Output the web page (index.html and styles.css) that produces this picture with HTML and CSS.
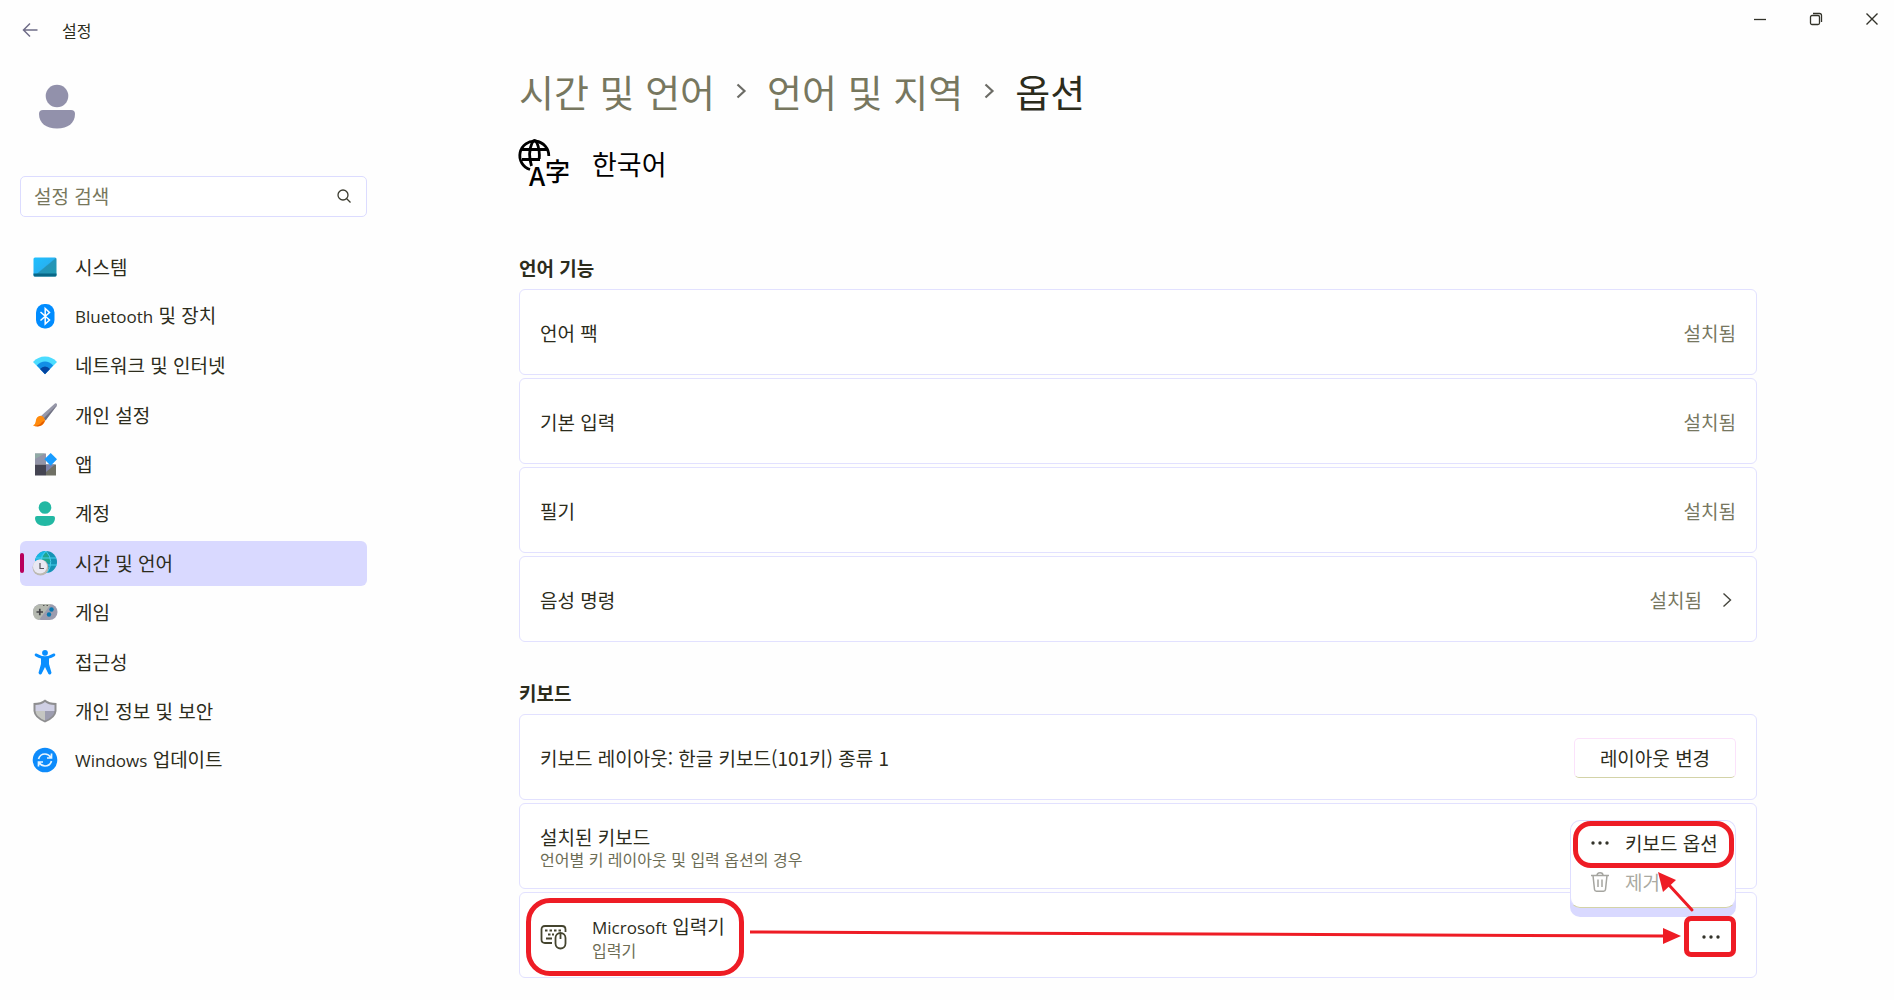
FILE: index.html
```html
<!DOCTYPE html>
<html lang="ko">
<head>
    <meta charset="UTF-8">
    <meta name="viewport" content="width=device-width, initial-scale=1.0">
    <title>설정</title>
    <link rel="stylesheet" href="styles.css">
</head>
<body>
    <header class="titlebar">
        <button class="back" aria-label="뒤로">
            <svg width="16" height="16" viewBox="0 0 16 16"><path d="M8 1.5 1.5 8 8 14.5M1.5 8H15.5" fill="none" stroke="#6f6d88" stroke-width="1.5"/></svg>
        </button>
        <span class="app-name">설정</span>
        <div class="window-controls">
            <button aria-label="최소화"><svg width="14" height="14" viewBox="0 0 14 14"><path d="M1 7.5H13" stroke="#33332a" stroke-width="1.3"/></svg></button>
            <button aria-label="이전 크기로"><svg width="14" height="14" viewBox="0 0 14 14" fill="none" stroke="#33332a" stroke-width="1.3"><rect x="1.5" y="3.5" width="9" height="9" rx="1.5"/><path d="M4 1.5H10.5Q12.5 1.5 12.5 3.5V10"/></svg></button>
            <button aria-label="닫기"><svg width="14" height="14" viewBox="0 0 14 14"><path d="M1.5 1.5 12.5 12.5M12.5 1.5 1.5 12.5" stroke="#33332a" stroke-width="1.4"/></svg></button>
        </div>
    </header>

    <div class="layout">
        <aside class="sidebar">
            <svg class="avatar" width="36" height="44" viewBox="0 0 36 44" fill="#9291ab"><circle cx="18" cy="11" r="11.3"/><path d="M4 25H32Q36 25 36 29C36 38 29 43.5 18 43.5S0 38 0 29Q0 25 4 25Z"/></svg>

            <label class="search">
                <input type="search" placeholder="설정 검색" aria-label="설정 검색">
                <svg width="14" height="14" viewBox="0 0 14 14" fill="none" stroke="#3c3c30" stroke-width="1.3"><circle cx="6" cy="6" r="5"/><path d="M9.5 9.5 13.5 13.5"/></svg>
            </label>

            <nav class="nav">
                <a href="#" class="nav-item">
                    <svg width="24" height="24" viewBox="0 0 24 24"><defs><linearGradient id="sys" x1="0" y1="0" x2="1" y2="1"><stop offset="0" stop-color="#1fc0ff"/><stop offset=".48" stop-color="#27b2f2"/><stop offset=".52" stop-color="#2494b8"/><stop offset="1" stop-color="#1f9bb0"/></linearGradient></defs><rect x=".5" y="2.5" width="23" height="19" rx="1.5" fill="url(#sys)"/><path d="M.5 18.5H23.5V20Q23.5 21.5 22 21.5H2Q.5 21.5 .5 20Z" fill="#086787"/></svg>
                    시스템
                </a>
                <a href="#" class="nav-item">
                    <svg width="24" height="24" viewBox="0 0 24 24"><rect x="3" y="0" width="18.5" height="24.5" rx="8.5" fill="#008cff"/><path d="M7.5 8 16.5 16 12.2 20V4.5L16.5 8.5 7.5 16.5" fill="none" stroke="#fff" stroke-width="1.5"/></svg>
                    <span><span class="latin">Bluetooth</span> 및 장치</span>
                </a>
                <a href="#" class="nav-item">
                    <svg width="24" height="24" viewBox="0 0 24 24"><path d="M0 9Q5 3.5 12 3.5T24 9L12 21Z" fill="#4bdcff"/><path d="M3.8 12.5Q7.5 8.5 12 8.5T20.2 12.5L12 21Z" fill="#128ee6"/><path d="M7 16Q9 13.5 12 13.5T17 16L12 21.2Z" fill="#0444a0"/></svg>
                    네트워크 및 인터넷
                </a>
                <a href="#" class="nav-item">
                    <svg width="24" height="24" viewBox="0 0 24 24"><path d="M22.2.3Q25 .2 23.6 3.3L12.5 17.5 8 13Z" fill="#9697a8"/><path d="M24 2 12.5 17.5 10.5 15.5Z" fill="#6f7080"/><path d="M7.500 12.800Q11.500 13.500 12 17.500C11 23 5 24.500 0 22.500Q2.500 21.500 2.700 18.500C3 15 5 13 7.500 12.800Z" fill="#ff8a0c"/><path d="M9 19Q7 22.500 1.500 23Q9 25 12 17.500Z" fill="#e45d00"/></svg>
                    개인 설정
                </a>
                <a href="#" class="nav-item">
                    <svg width="24" height="24" viewBox="0 0 24 24"><rect x="2" y="1.5" width="11" height="11" fill="#9294a8"/><path d="M2 1.5H12L2 7Z" fill="#91aaa6"/><rect x="2" y="12.5" width="11" height="11" fill="#444452"/><rect x="13" y="12.5" width="10" height="11" fill="#6f7065"/><path d="M13 12.5H22L13 20Z" fill="#7c82a8"/><path d="M17.7 1 24 7.3 17.7 13.8 11.4 7.3Z" fill="#189cff"/></svg>
                    앱
                </a>
                <a href="#" class="nav-item">
                    <svg width="24" height="24" viewBox="0 0 24 24" fill="#22b8a3"><circle cx="12" cy="6.5" r="6.3"/><path d="M4 15H20Q22 15 22 17C22 22 18 25 12 25S2 22 2 17Q2 15 4 15Z"/></svg>
                    계정
                </a>
                <a href="#" class="nav-item active" aria-current="page">
                    <svg width="24" height="24" viewBox="0 0 24 24"><circle cx="13" cy="11" r="11" fill="#1593b5"/><path d="M13 0A11 11 0 0 0 2 11H13Z" fill="#18b5e4"/><path d="M9 8Q11 2 13.5 1Q18 7 17 13" fill="#21a68f"/><path d="M3 7H23M7 14H24M13 0Q22 10 14 22M13 0Q8 4 8 10" fill="none" stroke="#48cfec" stroke-width="1"/><circle cx="7.5" cy="16.5" r="8" fill="#bcb9b2"/><circle cx="7" cy="15.5" r="7" fill="#e9e8f2"/><path d="M7 12V17.5H11" fill="none" stroke="#55555c" stroke-width="1.2"/></svg>
                    시간 및 언어
                </a>
                <a href="#" class="nav-item">
                    <svg width="24" height="24" viewBox="0 0 24 24"><rect x="0" y="4" width="24.5" height="16" rx="8" fill="#9c9cae"/><path d="M8 4H18L6 20Q0 19 0 12T8 4Z" fill="#b5b9b0"/><path d="M3.5 12H10M6.8 8.8V15.2" stroke="#444448" stroke-width="1.7"/><circle cx="18.5" cy="9.5" r="2.2" fill="#0878b0"/><circle cx="16" cy="14.5" r="2.2" fill="#0878b0"/><path d="M10 5.5H11.5M13.5 5.5H15" stroke="#555"/></svg>
                    게임
                </a>
                <a href="#" class="nav-item">
                    <svg width="24" height="24" viewBox="0 0 24 24" fill="#0a8fff"><circle cx="12" cy="2.8" r="2.9"/><path d="M3.5 3.6Q8 6.3 12 6.3T20.5 3.6C22.3 3 23 5.5 21.5 6.2Q18.500 8 16 8.500V14L18.500 22.800Q18 25.500 15.500 24L12 17 8.500 24Q6 25.500 5.500 22.800L8 14V8.500Q5.500 8 2.500 6.200C1 5.500 1.700 3 3.500 3.600Z"/></svg>
                    접근성
                </a>
                <a href="#" class="nav-item">
                    <svg width="24" height="24" viewBox="0 0 24 24"><path d="M12 .5Q16 4 23.5 4V12Q23 19 12 23.5Q1 19 .5 12V4Q8 4 12 .5Z" fill="#8e8e90"/><path d="M12 3Q15.5 5.8 21.5 6V12H2.5V6Q8.5 5.800 12 3Z" fill="#cfcfe4"/><path d="M2.500 12H12V21.500Q3 18 2.500 12Z" fill="#c5c6c2"/><path d="M12 12H21.500Q21 18 12 21.500Z" fill="#9d9db0"/></svg>
                    개인 정보 및 보안
                </a>
                <a href="#" class="nav-item">
                    <svg width="24" height="24" viewBox="0 0 24 24"><circle cx="12" cy="12" r="12.3" fill="#0d8bfb"/><path d="M5.500 11Q7 6 12 6Q15.500 6 18 9.500M18.500 5.500V10H14M18.500 13Q17 18 12 18Q8.500 18 6 14.500M5.500 18.500V14H10" fill="none" stroke="#e8f5ff" stroke-width="1.7"/></svg>
                    <span><span class="latin">Windows</span> 업데이트</span>
                </a>
            </nav>
        </aside>

        <main class="content">
            <h1 class="breadcrumb">
                <a href="#">시간 및 언어</a>
                <svg width="10" height="16" viewBox="0 0 10 16"><path d="M1.5 1.5 8.5 8 1.5 14.5" fill="none" stroke="#6c6c66" stroke-width="2.2"/></svg>
                <a href="#">언어 및 지역</a>
                <svg width="10" height="16" viewBox="0 0 10 16"><path d="M1.5 1.5 8.5 8 1.5 14.5" fill="none" stroke="#6c6c66" stroke-width="2.2"/></svg>
                <span>옵션</span>
            </h1>

            <div class="language">
                <svg class="language-icon" width="50" height="50" viewBox="0 0 50 50">
                    <g fill="none" stroke="#000" stroke-width="2.8">
                        <path d="M11 31.500A14.500 14.500 0 1 1 29.800 18"/>
                        <path d="M12.500 28Q8.500 15 13 5Q15.500 0 18 5Q21 12 20.200 21M3 11.500H28M3 21.500H21"/>
                    </g>
                    <text x="10" y="48" font-size="26">A</text>
                    <text x="26" y="43" font-size="25">字</text>
                </svg>
                <span>한국어</span>
            </div>

            <section class="group">
                <h2>언어 기능</h2>
                <div class="card"><span>언어 팩</span><span class="status">설치됨</span></div>
                <div class="card"><span>기본 입력</span><span class="status">설치됨</span></div>
                <div class="card"><span>필기</span><span class="status">설치됨</span></div>
                <a href="#" class="card">
                    <span>음성 명령</span>
                    <span class="status">설치됨</span>
                    <svg class="chevron" width="14" height="16" viewBox="0 0 14 16"><path d="M1.5 1.5 8.5 8 1.5 14.5" fill="none" stroke="#44443c" stroke-width="1.4"/></svg>
                </a>
            </section>

            <section class="group">
                <h2>키보드</h2>
                <div class="card">
                    <span>키보드 레이아웃: 한글 키보드(101키) 종류 1</span>
                    <button class="layout-btn">레이아웃 변경</button>
                </div>
                <div class="card">
                    <div>
                        <div>설치된 키보드</div>
                        <div class="sub">언어별 키 레이아웃 및 입력 옵션의 경우</div>
                    </div>
                </div>
                <div class="card ime">
                    <svg class="ime-icon" width="27" height="26" viewBox="0 0 27 26">
                        <g fill="none" stroke="#44442e" stroke-width="1.8">
                            <path d="M12 19H5Q1.5 19 1.5 15.5V5.5Q1.5 2 5 2H22Q25.5 2 25.5 5.5V8M6 14.5H12"/>
                            <rect x="15.5" y="9" width="10" height="15.5" rx="5"/>
                            <path d="M20.5 9V15"/>
                        </g>
                        <path d="M5 6.5H7.5M9.5 6.5H12M14 6.5H16.5M18.5 6.5H21M8 10.5H10.5M12 10.5H14" stroke="#44442e" stroke-width="2.2"/>
                    </svg>
                    <div>
                        <div><span class="latin">Microsoft</span> 입력기</div>
                        <div class="sub">입력기</div>
                    </div>
                    <button class="more" aria-label="추가 옵션">
                        <svg width="18" height="4" viewBox="0 0 18 4" fill="#33332a"><circle cx="2" cy="2" r="1.7"/><circle cx="9" cy="2" r="1.7"/><circle cx="16" cy="2" r="1.7"/></svg>
                    </button>

                    <div class="menu">
                        <button class="menu-item">
                            <svg width="18" height="20" viewBox="0 0 18 20" fill="#33332a"><circle cx="2" cy="10" r="1.7"/><circle cx="9" cy="10" r="1.7"/><circle cx="16" cy="10" r="1.7"/></svg>
                            키보드 옵션
                        </button>
                        <button class="menu-item" disabled>
                            <svg width="18" height="20" viewBox="0 0 18 20" fill="none" stroke="#a5a5a0" stroke-width="1.5"><path d="M0 3.5H18M2 3.5 3.5 17.5Q3.7 19.2 5.5 19.2H12.5Q14.3 19.2 14.5 17.5L16 3.5M6 3.5Q6 .8 9 .8T12 3.5M7 7.5V15M11 7.5V15"/></svg>
                            제거
                        </button>
                    </div>

                    <!-- step markers -->
                    <div class="mark mark-ime"></div>
                    <div class="mark mark-more"></div>
                    <div class="mark mark-option"></div>
                    <svg class="arrow-line" viewBox="0 0 100 8" preserveAspectRatio="none"><path d="M0 2 100 6" stroke="#ee1c25" stroke-width="3" vector-effect="non-scaling-stroke"/></svg>
                    <svg class="arrow-head" width="18" height="16" viewBox="0 0 18 16"><path d="M0 0 18 8 0 16Z" fill="#ee1c25"/></svg>
                    <svg class="arrow-up" width="36" height="40" viewBox="0 0 36 40"><path d="M34 38 11 13" stroke="#ee1c25" stroke-width="3" stroke-linecap="round"/><path d="M0 0 18 8 5 20Z" fill="#ee1c25"/></svg>
                </div>
            </section>
        </main>
    </div>
</body>
</html>
```
FILE: styles.css
```css
* {
    box-sizing: border-box;
}

body {
    margin: 0;
    background-color: #fefefe;
    color: #2c2c1c;
    font-family: "Noto Sans CJK KR", sans-serif;
    font-size: 19px;
    line-height: 24px;
}

a {
    color: inherit;
    text-decoration: none;
}

button {
    padding: 0;
    border: none;
    background: none;
    color: inherit;
    font: inherit;
    cursor: pointer;
}

svg {
    display: block;
    flex: none;
    overflow: visible;
}

.latin {
    font-family: "Open Sans", sans-serif;
    font-size: 17px;
}

/* title bar */
.titlebar {
    display: flex;
    align-items: center;
    height: 60px;
    padding: 0 2px 0 22px;
}

.app-name {
    margin-left: 24px;
    font-size: 16px;
    line-height: 22px;
}

.window-controls {
    display: flex;
    align-self: flex-start;
    gap: 16px;
    margin-left: auto;
}

.window-controls button {
    display: grid;
    place-items: center;
    width: 40px;
    height: 38px;
}

.layout {
    display: flex;
}

/* sidebar */
.sidebar {
    flex: none;
    width: 367px;
    padding: 25px 0 0 20px;
}

.avatar {
    margin-left: 19px;
}

.search {
    display: flex;
    align-items: center;
    height: 41px;
    margin-top: 47px;
    padding: 0 15px 2px 13px;
    border: 1px solid #dcdcff;
    border-radius: 5px;
    background-color: #fff;
}

.search input {
    flex: 1;
    min-width: 0;
    padding: 0;
    border: none;
    outline: none;
    background: none;
    color: inherit;
    font: inherit;
}

.search input::placeholder {
    color: #77775c;
    opacity: 1;
}

.nav {
    display: flex;
    flex-direction: column;
    justify-content: space-between;
    min-height: 539px;
    margin-top: 28px;
}

.nav-item {
    position: relative;
    display: flex;
    align-items: center;
    gap: 18px;
    height: 45px;
    padding: 0 0 2px 13px;
    border-radius: 6px;
}

.nav-item.active {
    background-color: #d9d9ff;
}

.nav-item.active::before {
    content: "";
    position: absolute;
    left: 0;
    width: 4px;
    height: 20px;
    border-radius: 2px;
    background-color: #b8005c;
}

/* content */
.content {
    flex: 1;
    padding: 3px 137px 20px 152px;
}

.breadcrumb {
    display: flex;
    align-items: center;
    gap: 21px;
    margin: 0;
    font-size: 38px;
    font-weight: 400;
    line-height: 56px;
}

.breadcrumb a {
    color: #77775f;
}

.language {
    display: flex;
    align-items: center;
    gap: 23px;
    margin-top: 17px;
    color: #000;
    font-size: 27px;
    line-height: 50px;
}

.language span {
    padding-top: 3px;
}

.language-icon {
    font-weight: 500;
}

.group {
    display: flex;
    flex-direction: column;
    gap: 3px;
    margin-top: 39px;
}

.language + .group {
    margin-top: 67px;
}

.group h2 {
    margin: 0 0 6px;
    font-size: 19px;
    font-weight: 700;
    line-height: 24px;
}

.card {
    position: relative;
    display: flex;
    align-items: center;
    min-height: 86px;
    padding: 1px 20px 0;
    border: 1px solid #e2e1ff;
    border-radius: 6px;
    background-color: #fff;
}

.status {
    margin-left: auto;
    color: #77775f;
}

.chevron {
    margin-left: 20px;
}

.sub {
    color: #6d6d55;
    font-size: 16px;
    line-height: 20px;
}

.layout-btn {
    width: 162px;
    height: 40px;
    margin-left: auto;
    border: 1px solid #fbe2fb;
    border-bottom-color: #d3d3a8;
    border-radius: 5px;
}

.ime {
    padding-top: 3px;
}

.ime-icon {
    margin-right: 25px;
}

.more {
    display: grid;
    place-items: center;
    width: 50px;
    height: 40px;
    margin-left: auto;
}

.menu {
    position: absolute;
    top: -73px;
    right: 20px;
    z-index: 1;
    width: 166px;
    padding: 2px 4px 6px;
    border: 1px solid #dfdeff;
    border-bottom-color: #d3d3a8;
    border-radius: 10px;
    background-color: #fff;
    box-shadow: 0 9px 0 #d9d9ff;
}

.menu-item {
    display: flex;
    align-items: center;
    gap: 16px;
    width: 100%;
    height: 39px;
    padding-left: 16px;
    white-space: nowrap;
}

.menu-item:disabled {
    color: #aaaaa2;
}

/* red step markers */
.mark {
    position: absolute;
    z-index: 2;
    border: 5px solid #ee1c25;
    pointer-events: none;
}

.mark-ime {
    top: 5px;
    left: 6px;
    width: 218px;
    height: 78px;
    border-radius: 24px;
}

.mark-more {
    top: 23px;
    right: 20px;
    width: 52px;
    height: 41px;
    border-radius: 7px;
}

.mark-option {
    top: -72px;
    right: 22px;
    width: 161px;
    height: 47px;
    border-radius: 18px;
}

.arrow-line {
    position: absolute;
    top: 37px;
    left: 230px;
    width: calc(100% - 322px);
    height: 8px;
}

.arrow-head {
    position: absolute;
    top: 35px;
    right: 75px;
}

.arrow-up {
    position: absolute;
    top: -21px;
    right: 62px;
    z-index: 2;
}
```
